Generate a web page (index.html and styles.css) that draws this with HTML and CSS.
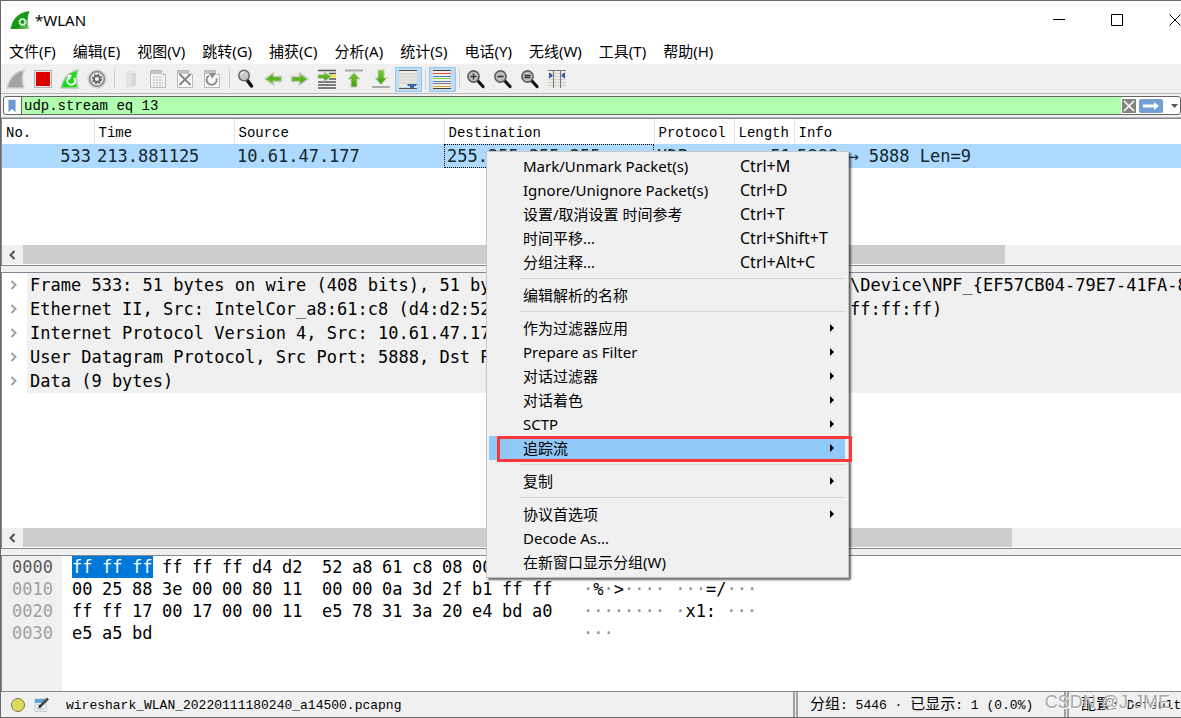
FILE: index.html
```html
<!DOCTYPE html>
<html lang="zh-CN">
<head>
<meta charset="utf-8">
<title>*WLAN</title>
<link rel="stylesheet" href="styles.css">
</head>
<body>
<svg class="defs" aria-hidden="true">
  <defs>
    <linearGradient id="fin" x1="0" y1="0" x2="1" y2="1"><stop offset="0" stop-color="#2fae1c"/><stop offset=".6" stop-color="#0f9313"/><stop offset="1" stop-color="#8fd28a"/></linearGradient>
    <linearGradient id="arrow" x1="0" y1="0" x2="0" y2="1"><stop offset="0" stop-color="#7ccb35"/><stop offset="1" stop-color="#3f9c08"/></linearGradient>
    <symbol id="lens" viewBox="0 0 20 20"><path d="M11.500 11.500L17 17.500" stroke="#111" stroke-width="3.200" stroke-linecap="round"/><circle cx="7.500" cy="7.500" r="5.600" fill="#bdbdbd" stroke="#5b5b5b" stroke-width="1.600"/></symbol>
    <symbol id="sheet" viewBox="0 0 20 20"><path d="M2.500 1.500h11l4 4v13h-15z" fill="#f7f7f7" stroke="#b9b9b9"/><path d="M3 2h10v3H3z" fill="#c4c4c4"/><path d="M13.500 1.500v4h4" fill="#fff" stroke="#b9b9b9"/></symbol>
    <symbol id="right" viewBox="0 0 20 20"><path d="M1.500 7.500h8V4l8.500 6-8.500 6v-3.500h-8z" fill="url(#arrow)" stroke="#c3cdbb" stroke-width="1.500"/></symbol>
  </defs>
</svg>
<main class="window">
  <header class="titlebar">
    <svg class="app-icon" viewBox="0 0 20 20"><path d="M.500 19C2 10 8 2 19.500 1 17 7 17 13 19 19z" fill="url(#fin)"/><circle cx="12.500" cy="12" r="2.700" fill="none" stroke="#d9f2d5" stroke-width="1.500"/><circle cx="12.500" cy="12" r="3.800" fill="none" stroke="#d9f2d5" stroke-dasharray="1.500 1.500"/></svg>
    <h1 class="title">*WLAN</h1>
    <div class="window-buttons">
      <button aria-label="最小化"><svg viewBox="0 0 12 12"><path d="M0 5.500h12"/></svg></button>
      <button aria-label="最大化"><svg viewBox="0 0 12 12"><path d="M.500.500h11v11H.500z"/></svg></button>
      <button aria-label="关闭"><svg viewBox="0 0 12 12"><path d="M.500.500l11 11M11.500.500l-11 11"/></svg></button>
    </div>
  </header>
  <nav class="menubar">
    <button>文件(F)</button><button>编辑(E)</button><button>视图(V)</button><button>跳转(G)</button><button>捕获(C)</button><button>分析(A)</button><button>统计(S)</button><button>电话(Y)</button><button>无线(W)</button><button>工具(T)</button><button>帮助(H)</button>
  </nav>
  <div class="toolbar">
    <button aria-label="开始捕获"><svg viewBox="0 0 20 20"><path d="M1 19C3 10 8 3 18 1c-2 6-2 12 0 18z" fill="#a3a3a3" stroke="#d2d2d2" stroke-width="1.500"/></svg></button>
    <button aria-label="停止捕获"><svg viewBox="0 0 20 20"><path d="M1.500 1.500h17v17h-17z" fill="#e8e8e8" stroke="#b5b5b5"/><path d="M3 3h14v14H3z" fill="#de0000"/></svg></button>
    <button aria-label="重新开始捕获"><svg viewBox="0 0 20 20"><path d="M1 19C3 10 8 3 18 1c-2 6-2 12 0 18z" fill="#19dc19" stroke="#b4cdb4" stroke-width="1.500"/><path d="M9 8.500a4 4 0 1 0 5 .500" fill="none" stroke="#fff" stroke-width="2"/><path d="M7 6l5 0-2.500 5z" fill="#fff"/></svg></button>
    <button aria-label="捕获选项"><svg viewBox="0 0 20 20"><circle cx="10" cy="10" r="9.200" fill="#e6e6e6" stroke="#cdcdcd"/><circle cx="10" cy="10" r="7.300" fill="#ededed" stroke="#8a8a8a" stroke-width="1.800"/><circle cx="10" cy="10" r="3.200" fill="none" stroke="#6c6c6c" stroke-width="2.200"/><circle cx="10" cy="10" r="4.600" fill="none" stroke="#6c6c6c" stroke-width="1.400" stroke-dasharray="1.800 1.810"/></svg></button>
    <span class="tool-sep"></span>
    <button aria-label="打开"><svg viewBox="0 0 20 20"><path d="M5 2h7v16H5z" fill="#e2e2e2"/><path d="M11 4h4v12l-4 2z" fill="#d6d6d6"/></svg></button>
    <button aria-label="保存"><svg viewBox="0 0 20 20"><use href="#sheet"/><path d="M5 8h10M5 11h10M5 14h10M5 16.500h10" stroke="#c6c6c6" stroke-width="1.600" stroke-dasharray="2 1"/></svg></button>
    <button aria-label="关闭文件"><svg viewBox="0 0 20 20"><use href="#sheet"/><path d="M4.500 5l11 11M15.500 5l-11 11" stroke="#828282" stroke-width="1.800"/></svg></button>
    <button aria-label="重新加载"><svg viewBox="0 0 20 20"><use href="#sheet"/><path d="M7 6.500a5 5 0 1 0 7.500 3" fill="none" stroke="#8b8b8b" stroke-width="2"/><path d="M7 4h7l-4 5.500z" fill="#8b8b8b"/></svg></button>
    <span class="tool-sep"></span>
    <button aria-label="查找"><svg viewBox="0 0 20 20"><path d="M11 11l4.500 6" stroke="#111" stroke-width="3.500" stroke-linecap="round"/><circle cx="8" cy="6.500" r="5.200" fill="#c9c9c9" stroke="#666" stroke-width="1.500"/><path d="M5 6a3 3 0 0 1 3-3" stroke="#fff" fill="none"/></svg></button>
    <button aria-label="上一个"><svg viewBox="0 0 20 20"><use href="#right" transform="rotate(180 10 10)"/></svg></button>
    <button aria-label="下一个"><svg viewBox="0 0 20 20"><use href="#right"/></svg></button>
    <button aria-label="转到分组"><svg viewBox="0 0 20 20"><path d="M1 1.500h18M1 13h18M1 16h18M1 19h18M12 4.500h7M12 10h7" stroke="#555" stroke-width="1.300"/><path d="M14 7.200h5" stroke="#ffe23a" stroke-width="3"/><path d="M1 5.500h6V3l7.500 4.500L7 12.500V9.500H1z" fill="url(#arrow)" stroke="#c3cdbb"/></svg></button>
    <button aria-label="首个分组"><svg viewBox="0 0 20 20"><path d="M1 1.500h18" stroke="#aaa" stroke-width="2"/><path d="M10 3.500l6 6.500h-3v8H7v-8H4z" fill="url(#arrow)" stroke="#c3cdbb"/></svg></button>
    <button aria-label="最后分组"><svg viewBox="0 0 20 20"><path d="M1 18h18" stroke="#aaa" stroke-width="2"/><path d="M10 15.500L4 9h3V1h6v8h3z" fill="url(#arrow)" stroke="#c3cdbb"/></svg></button>
    <button class="active" aria-pressed="true" aria-label="自动滚动"><svg viewBox="0 0 20 20"><path d="M1 2h18v16H1z" fill="#ecece6"/><path d="M1 1.500h18M1 19.500h18" stroke="#555"/><path d="M1 5h18M1 8h18M1 11h18M1 14h18" stroke="#c6cbc4"/><path d="M9 15h10l-1 2h-1.500l-1 2h-3l-1-2H10z" fill="#3465a8"/></svg></button>
    <span class="tool-sep"></span>
    <button class="active" aria-pressed="true" aria-label="分组着色"><svg viewBox="0 0 20 20"><path d="M1 1h18v18H1z" fill="#f0f0e8"/><path d="M1 1.500h18" stroke="#444"/><path d="M1 4.500h18" stroke="#e04444"/><path d="M1 7.500h18" stroke="#3b7cc0"/><path d="M1 9.500h18" stroke="#79d943"/><path d="M1 12.500h18" stroke="#5582b4"/><path d="M1 14.500h18" stroke="#876f9d"/><path d="M1 17.500h18" stroke="#d1ad27"/><path d="M1 19.500h18" stroke="#444"/></svg></button>
    <span class="tool-sep"></span>
    <button aria-label="放大"><svg viewBox="0 0 20 20"><use href="#lens"/><path d="M4.500 7.500h6M7.500 4.500v6" stroke="#333" stroke-width="1.300"/></svg></button>
    <button aria-label="缩小"><svg viewBox="0 0 20 20"><use href="#lens"/><path d="M4.500 7.500h6" stroke="#333" stroke-width="1.500"/></svg></button>
    <button aria-label="普通大小"><svg viewBox="0 0 20 20"><use href="#lens"/><path d="M4.500 6.500h6M4.500 8.500h6" stroke="#333" stroke-width="1.400"/></svg></button>
    <button aria-label="调整列宽"><svg viewBox="0 0 20 20"><path d="M1 1h18v18H1z" fill="#ecece7"/><path d="M1 4.500h18M1 7.500h18M1 10.500h18M1 13.500h18M1 16.500h18" stroke="#d4d4cf"/><path d="M1 1.500h18M6.500 1v18M13.500 1v18" stroke="#777"/><path d="M2.500 4l3 2.500-3 2.500zM17.500 4l-3 2.500 3 2.500z" fill="#2f62aa" stroke="#2f62aa"/></svg></button>
  </div>
  <form class="filterbar">
    <div class="filter">
      <button type="button" class="bookmark" aria-label="书签"><svg viewBox="0 0 9 14"><path d="M.500 0h8v14l-4-3.500-4 3.500z" fill="#6f9bd3"/></svg></button>
      <input class="filter-input" aria-label="显示过滤器" value="udp.stream eq 13" spellcheck="false">
      <button type="button" class="clear" aria-label="清除"><svg viewBox="0 0 14 14"><path d="M2 2l10 10M12 2L2 12" stroke="#fff" stroke-width="1.500"/></svg></button>
      <button type="button" class="apply" aria-label="应用"><svg viewBox="0 0 24 14"><path d="M4 5.500h11V3l5 4-5 4V8.500H4z" fill="#fff"/></svg></button>
      <button type="button" class="recent" aria-label="最近过滤器"><svg viewBox="0 0 7 4"><path d="M0 0h7L3.500 4z" fill="#555"/></svg></button>
    </div>
  </form>
  <section class="pane pane-list">
    <table class="packets">
      <colgroup><col class="c-no"><col class="c-time"><col class="c-addr"><col class="c-addr"><col class="c-proto"><col class="c-len"><col></colgroup>
      <thead><tr><th>No.</th><th>Time</th><th>Source</th><th>Destination</th><th>Protocol</th><th>Length</th><th>Info</th></tr></thead>
      <tbody><tr><td class="num">533</td><td>213.881125</td><td>10.61.47.177</td><td class="focused">255.255.255.255</td><td>UDP</td><td class="num">51</td><td>5888 → 5888 Len=9</td></tr></tbody>
    </table>
    <div class="scrollbar"><button aria-label="向左滚动"><svg viewBox="0 0 8 10"><path d="M6.500 1l-4 4 4 4"/></svg></button><div class="track"><div class="thumb" style="width:84.8%"></div></div></div>
  </section>
  <section class="pane pane-details">
    <ul class="tree">
      <li><button aria-label="展开"><svg viewBox="0 0 8 10"><path d="M1.500 1l4 4-4 4"/></svg></button><span class="lead">Frame 533: 51 bytes on wire (408 bits), 51 bytes captured (408 bits) on interface</span><span class="tail">\Device\NPF_{EF57CB04-79E7-41FA-8</span></li>
      <li><button aria-label="展开"><svg viewBox="0 0 8 10"><path d="M1.500 1l4 4-4 4"/></svg></button><span class="lead">Ethernet II, Src: IntelCor_a8:61:c8 (d4:d2:52:a8:61:c8), Dst: Broadcast (ff:ff:ff:</span><span class="tail">ff:ff:ff)</span></li>
      <li><button aria-label="展开"><svg viewBox="0 0 8 10"><path d="M1.500 1l4 4-4 4"/></svg></button><span class="tail indent">Internet Protocol Version 4, Src: 10.61.47.177, Dst: 255.255.255.255</span></li>
      <li><button aria-label="展开"><svg viewBox="0 0 8 10"><path d="M1.500 1l4 4-4 4"/></svg></button><span class="tail indent">User Datagram Protocol, Src Port: 5888, Dst Port: 5888</span></li>
      <li><button aria-label="展开"><svg viewBox="0 0 8 10"><path d="M1.500 1l4 4-4 4"/></svg></button><span class="tail indent">Data (9 bytes)</span></li>
    </ul>
    <div class="scrollbar"><button aria-label="向左滚动"><svg viewBox="0 0 8 10"><path d="M6.500 1l-4 4 4 4"/></svg></button><div class="track"><div class="thumb" style="width:85.4%"></div></div></div>
  </section>
  <section class="pane pane-bytes">
    <pre class="offsets"><b>0000</b>
0010
0020
0030</pre>
    <table class="hex">
      <tr><td><mark>ff</mark></td><td><mark>ff</mark></td><td><mark class="last">ff</mark></td><td>ff</td><td>ff</td><td>ff</td><td>d4</td><td>d2</td><td class="gap"></td><td>52</td><td>a8</td><td>61</td><td>c8</td><td>08</td><td>00</td><td>45</td><td>00</td></tr>
      <tr><td>00</td><td>25</td><td>88</td><td>3e</td><td>00</td><td>00</td><td>80</td><td>11</td><td class="gap"></td><td>00</td><td>00</td><td>0a</td><td>3d</td><td>2f</td><td>b1</td><td>ff</td><td>ff</td></tr>
      <tr><td>ff</td><td>ff</td><td>17</td><td>00</td><td>17</td><td>00</td><td>00</td><td>11</td><td class="gap"></td><td>e5</td><td>78</td><td>31</td><td>3a</td><td>20</td><td>e4</td><td>bd</td><td>a0</td></tr>
      <tr><td>e5</td><td>a5</td><td>bd</td></tr>
    </table>
    <pre class="ascii"><mark>···</mark><i>·····</i> R<i>·</i>a<i>···</i>E<i>·</i>
<i>·</i>%<i>·</i>&gt;<i>····</i> <i>···</i>=/<i>···</i>
<i>········</i> <i>·</i>x1: <i>···</i>
<i>···</i></pre>
  </section>
  <footer class="statusbar">
    <button aria-label="专家信息"><svg viewBox="0 0 16 16"><circle cx="8" cy="8" r="6.500" fill="#dcdc5c" stroke="#777746"/></svg></button>
    <button aria-label="捕获文件注释"><svg viewBox="0 0 16 16"><path d="M1 2h11v12.500H1z" fill="#eef3f5" stroke="#c4cccf"/><path d="M1 2h10v4H1z" fill="#5aa6d8"/><path d="M3 8h5M3 10h4M3 12h7" stroke="#aaa"/><path d="M6 9.500L14 1.500" stroke="#444" stroke-width="2.500"/><path d="M4.500 11l1-3 2 2z" fill="#111"/></svg></button>
    <span class="file">wireshark_WLAN_20220111180240_a14500.pcapng</span>
    <span class="segment packets-count"><span lang="zh">分组</span>: 5446 · <span lang="zh">已显示</span>: 1 (0.0%)</span>
    <span class="segment profile"><span lang="zh">配置</span>: Default</span>
    <span class="watermark">CSDN @J-JME</span>
  </footer>
  <div class="context-menu" role="menu">
    <button role="menuitem"><span>Mark/Unmark Packet(s)</span><kbd>Ctrl+M</kbd></button>
    <button role="menuitem"><span>Ignore/Unignore Packet(s)</span><kbd>Ctrl+D</kbd></button>
    <button role="menuitem"><span>设置/取消设置 时间参考</span><kbd>Ctrl+T</kbd></button>
    <button role="menuitem"><span>时间平移...</span><kbd>Ctrl+Shift+T</kbd></button>
    <button role="menuitem"><span>分组注释...</span><kbd>Ctrl+Alt+C</kbd></button>
    <hr>
    <button role="menuitem"><span>编辑解析的名称</span></button>
    <hr>
    <button role="menuitem" class="sub"><span>作为过滤器应用</span></button>
    <button role="menuitem" class="sub"><span>Prepare as Filter</span></button>
    <button role="menuitem" class="sub"><span>对话过滤器</span></button>
    <button role="menuitem" class="sub"><span>对话着色</span></button>
    <button role="menuitem" class="sub"><span>SCTP</span></button>
    <button role="menuitem" class="sub selected"><span>追踪流</span></button>
    <hr>
    <button role="menuitem" class="sub"><span>复制</span></button>
    <hr>
    <button role="menuitem" class="sub"><span>协议首选项</span></button>
    <button role="menuitem"><span>Decode As...</span></button>
    <button role="menuitem"><span>在新窗口显示分组(W)</span></button>
  </div>
</main>
</body>
</html>
```
FILE: styles.css
```css
:root {
  --ui: "Noto Sans", "Noto Sans CJK SC", sans-serif;
  --mono: "DejaVu Sans Mono", monospace;
  --typewriter: "Liberation Mono", "Noto Sans CJK SC", monospace;
  --panel: #f0f0f0;
  --edge: #828790;
}

* { box-sizing: border-box; }

body {
  margin: 0;
  font: 15px/24px var(--ui);
  color: #000;
  background: #fff;
}

button {
  margin: 0;
  padding: 0;
  border: 0;
  background: none;
  color: inherit;
  font: inherit;
}

svg { display: block; }
.defs { position: absolute; width: 0; height: 0; }

.window {
  position: relative;
  display: flex;
  flex-direction: column;
  min-height: 100vh;
  overflow: hidden;
  background: var(--panel);
  border: solid #6c696c;
  border-width: 1px 0 1px 1px;
}

.titlebar {
  display: flex;
  align-items: center;
  height: 37px;
  padding-left: 9px;
  background: #fff;
}
.app-icon { width: 20px; height: 20px; }
.title { margin: 0 0 0 5px; font-size: 15px; font-weight: 400; }
.window-buttons { display: flex; margin-left: auto; margin-right: -23px; }
.window-buttons button { width: 58px; padding: 12px 23px; }
.window-buttons svg { width: 12px; height: 12px; fill: none; stroke: #000; }

.menubar {
  display: flex;
  gap: 17px;
  height: 27px;
  padding-left: 8px;
  background: #fff;
  border-bottom: 1px solid #f0f0f0;
}

.toolbar {
  display: flex;
  align-items: center;
  height: 29px;
  padding-left: 2px;
  border-bottom: 1px solid #b8b8b8;
}
.toolbar button {
  display: grid;
  place-items: center start;
  width: 27px;
  height: 25px;
  padding-left: 2px;
  border: 1px solid transparent;
}
.toolbar svg { width: 20px; height: 20px; }
.toolbar .active { background: #c0dcf3; border-color: #90c8f6; }
.tool-sep { width: 1px; height: 20px; margin: 0 3px; background: #cfcfcf; }

.filterbar { padding: 2px 0 2px 2px; border-bottom: 1px solid #b8b8b8; }
.filter {
  display: flex;
  align-items: center;
  height: 19px;
  background: #fff;
  border: 1px solid #646464;
  border-radius: 3px;
}
.bookmark { padding: 0 5px 0 4px; }
.bookmark svg { width: 8px; height: 14px; }
.filter-input {
  flex: 1;
  align-self: stretch;
  min-width: 0;
  padding: 2px 2px 0;
  border: 0;
  border-left: 1px solid #646464;
  background: #afffaf;
  color: #000;
  font: 14px/15px var(--typewriter);
}
.clear { margin: 0 3px 0 1px; background: #85857f; border-radius: 1px; }
.clear svg { width: 14px; height: 14px; }
.apply { background: #739fd3; border-radius: 2px; }
.apply svg { width: 24px; height: 14px; }
.recent { padding: 0 2px 0 8px; }
.recent svg { width: 7px; height: 4px; }

.pane {
  display: flex;
  flex-direction: column;
  background: #fff;
  border: 1px solid var(--edge);
  border-right: 0;
}
.pane-list { flex: 148 1 148px; margin-bottom: 6px; }
.pane-details { flex: 277 1 277px; margin-bottom: 6px; }
.pane-bytes { flex: 137 1 137px; flex-direction: row; align-items: flex-start; }

.packets {
  width: 100%;
  table-layout: fixed;
  border-collapse: collapse;
  white-space: nowrap;
}
.c-no { width: 92px; }
.c-time { width: 140px; }
.c-addr { width: 210px; }
.c-proto { width: 80px; }
.c-len { width: 60px; }
.packets th {
  height: 25px;
  padding: 3px 4px 0;
  border-right: 1px solid #e3e3e3;
  font: 14px/22px var(--typewriter);
  text-align: left;
}
.packets th:last-child { border-right: 0; }
.packets td {
  height: 24px;
  padding: 0 3px;
  background: #aedaff;
  color: #12272e;
  font: 17px/24px var(--mono);
}
.packets .num { text-align: right; }
.packets .focused { outline: 1px dotted #000; outline-offset: -1px; }

.scrollbar { display: flex; height: 19px; margin-top: auto; margin-bottom: 1px; background: var(--panel); }
.scrollbar button { width: 21px; padding: 0 6px; }
.scrollbar svg { width: 8px; height: 10px; fill: none; stroke: #505050; stroke-width: 2; }
.track { flex: 1; }
.thumb { height: 100%; background: #cdcdcd; }

.tree {
  margin: 0;
  padding: 0;
  overflow: hidden;
  list-style: none;
  font: 17px/24px var(--mono);
  white-space: nowrap;
}
.tree li { display: flex; }
.tree button { flex: none; width: 25px; padding: 0 8px; }
.tree svg { width: 8px; height: 10px; fill: none; stroke: #a0a0a0; stroke-width: 2; }
.tree span { background: var(--panel); }
.lead { flex: none; width: 823px; padding-left: 3px; overflow: hidden; }
.tail { flex: 1; }
.indent { padding-left: 3px; }

.pane-bytes { font: 17px/22px var(--mono); }
.pane-bytes pre { margin: 0; font: inherit; }
.pane-bytes .offsets { align-self: stretch; width: 60px; padding-left: 10px; background: var(--panel); color: #a0a0a0; }
.offsets b { color: #5a5a5a; font-weight: 400; }
.hex { margin-left: 10px; border-collapse: collapse; table-layout: fixed; width: 490px; }
.hex td { width: 30px; padding: 0; }
.hex .gap { width: 10px; }
.hex mark { display: block; }
.hex .last { width: 21px; }
.pane-bytes .ascii { margin-left: 21px; }
.ascii i { color: #8c8c8c; font-style: normal; }
mark { background: #0078d7; color: #fff; }

.statusbar {
  position: relative;
  display: flex;
  align-items: center;
  height: 25px;
  padding-left: 9px;
  overflow: hidden;
  font: 13px/22px var(--typewriter);
  white-space: nowrap;
}
.statusbar svg { width: 16px; height: 16px; }
.statusbar button + button { margin-left: 8px; }
.file { flex: 1; margin-left: 16px; padding-top: 3px; }
.segment { display: block; white-space: pre; padding: 3px 0 0 12px; border-left: 5px double #a0a0a0; }
.segment [lang] { font-size: 15px; }
.packets-count { width: 271px; }
.profile { width: 117px; }
.watermark {
  position: absolute;
  right: 11px;
  top: -2px;
  font: 18px/24px "Liberation Sans", sans-serif;
  color: #a9a9a9;
  text-shadow: 1px 1px 0 #fff;
}

.context-menu {
  position: absolute;
  left: 485px;
  top: 150px;
  width: 363px;
  padding: 2px 3px 3px 2px;
  background: var(--panel);
  border: 1px solid #c6c6c6;
  box-shadow: 2px 2px 2px rgba(0, 0, 0, .6);
}
.context-menu button {
  position: relative;
  display: grid;
  grid-template-columns: 217px 1fr;
  width: 100%;
  height: 24px;
  padding-left: 34px;
  text-align: left;
}
.context-menu kbd { font: 16px/24px var(--ui); }
.context-menu hr {
  height: 1px;
  margin: 4px 0 4px 30px;
  border: 0;
  background: #d7d7d7;
}
.context-menu .sub::before {
  content: "";
  position: absolute;
  right: 11px;
  top: 8px;
  border: 4px solid transparent;
  border-left-color: #000;
  border-right: 0;
}
.context-menu .selected { background: #90c8f6; }
.context-menu .selected::after {
  content: "";
  position: absolute;
  inset: 0 -7px -2px 8px;
  border: 3px solid #f83838;
}
```
